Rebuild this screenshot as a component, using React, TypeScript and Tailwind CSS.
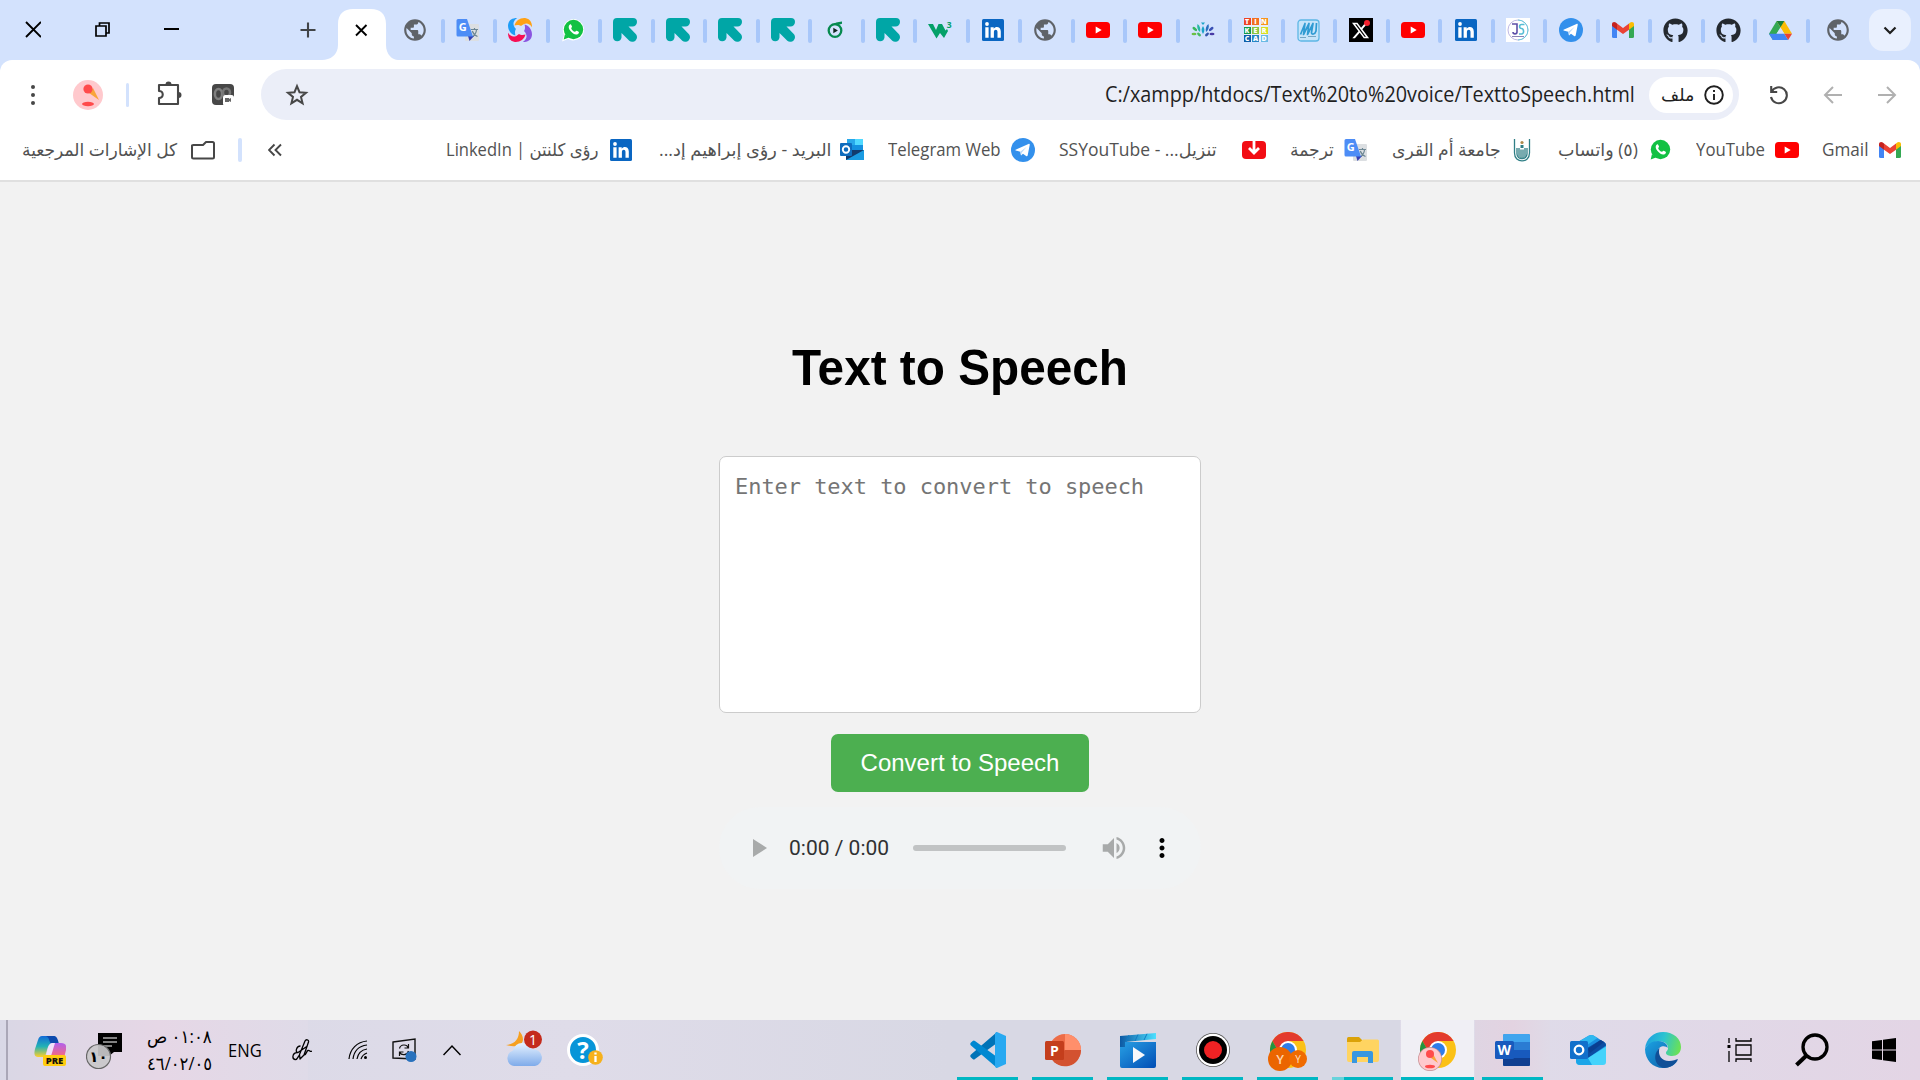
import { useLayoutEffect, useRef, useState, type ReactNode } from "react";
import { FaGithub, FaXTwitter } from "react-icons/fa6";
import { MdPublic, MdVolumeUp, MdMoreVert } from "react-icons/md";

/* A line of text stretched to fill the width of its box. */
function Fit({ className, dir = "rtl", children }: { className: string; dir?: "rtl" | "ltr"; children: ReactNode }) {
  const box = useRef<HTMLDivElement>(null);
  const text = useRef<HTMLSpanElement>(null);
  const [scale, setScale] = useState(1);
  useLayoutEffect(() => {
    const measure = () => {
      if (box.current && text.current) setScale(box.current.offsetWidth / text.current.offsetWidth);
    };
    measure();
    document.fonts.ready.then(measure);
  }, []);
  return (
    <div ref={box} className={"flex shrink-0 justify-start overflow-visible whitespace-nowrap " + className}>
      <span ref={text} dir={dir} className="inline-block shrink-0 origin-left" style={{ transform: `scaleX(${scale})` }}>
        {children}
      </span>
    </div>
  );
}

const Globe = () => <MdPublic className="size-[26px] text-[#5f6368]" />;

const Translate = () => (
  <svg className="size-6" viewBox="0 0 24 24">
    <rect x="9" y="6" width="14" height="17" rx="1.2" fill="#dcdfe2" />
    <path d="M15 11.5h7M18.5 10v1.5M16 19c3-2 4.300-4.500 4.500-7.300M16.300 13c.8 2.700 3 4.500 5.200 5.500" stroke="#6d8794" strokeWidth="1.200" fill="none" />
    <path d="M12 18h6l-4.500 5z" fill="#3540b5" />
    <path d="M2 1h9l6 17.500H2A1.500 1.500 0 0 1 .5 17V2.500A1.500 1.500 0 0 1 2 1z" fill="#4d8df6" />
    <text x="2.800" y="13.200" fontSize="11" fontWeight="700" fill="#fff" className="font-['Open_Sans']">G</text>
  </svg>
);

/* One blade of the pinwheel, turned by quarter steps. */
const blade = "M6.500 7.500C7.500 2.500 13-.8 18 .2c4 .8 6 4 6 9-3-4.500-7-5-11-1.200C11 6.500 8 7 6.500 7.500z";
const Swirl = () => (
  <svg className="size-6" viewBox="0 0 24 24">
    <path d={blade} fill="#ffa114" />
    <path d={blade} fill="#8a55e0" transform="rotate(90 12 12)" />
    <path d={blade} fill="#f70f55" transform="rotate(180 12 12)" />
    <path d={blade} fill="#1e9df7" transform="rotate(270 12 12)" />
  </svg>
);

const Whats = () => (
  <svg className="size-6" viewBox="0 0 24 24">
    <path d="M12.500 1A10.700 10.700 0 1 1 7 21L1 23.500 3 17A11 11 0 0 1 12.500 1z" fill="#fff" />
    <circle cx="12.500" cy="11.500" r="9.700" fill="#12c143" />
    <path d="M4 16l-1.300 5.500 5.300-2z" fill="#12c143" />
    <path d="M9 6.500c-2 1.500-1.500 4 .5 6.500s5 4.500 7.500 3c1.500-1 1-2 .3-2.400l-1.600-.8c-.7-.3-1 .9-1.700 1-1.600-.3-3.400-2-3.800-3.600 0-.5 1-.8.8-1.600l-.7-1.700c-.2-.5-.8-.7-1.300-.4z" fill="#fff" />
  </svg>
);

const ArrowMark = () => (
  <svg className="size-6" viewBox="0 0 24 24" fill="#00a6a6">
    <path d="M0 4a4 4 0 0 1 4-4h16a4 4 0 0 1 4 4c0 2.500-2 4.500-4.500 4.500h-4l7 7.200c2 2 1.900 4.800.3 6.500s-4.700 2.300-6.500.5L8.500 15v4.500A4.300 4.300 0 0 1 0 19.500z" />
  </svg>
);

const PlayRing = () => (
  <svg className="size-6" viewBox="0 0 24 24">
    <circle cx="12" cy="12.500" r="6.300" fill="none" stroke="#068a4f" strokeWidth="2.300" />
    <path d="M9.500 7c2-2.500 5-2.600 9.500-3.400v2.200l-4.500 1.500" fill="#068a4f" />
    <path d="M10.300 9.800l4.600 2.700-4.600 2.700z" fill="#10271e" />
  </svg>
);

const W3 = () => (
  <svg className="size-6" viewBox="0 0 24 24">
    <path d="M0 6h5l3 6 2.500-6H14l3.500 6.500 1.500-1.500 1 2-4 7-4-5-3.500 5.500z" fill="#04a068" />
    <text x="18.800" y="9.500" fontSize="8.500" fontWeight="700" fill="#04a068" className="font-['Open_Sans']">3</text>
  </svg>
);

const LinkedIn = () => (
  <svg className="size-[22px]" viewBox="0 0 22 22">
    <rect width="22" height="22" rx="1.500" fill="#0a66c2" />
    <path d="M3.300 8.300h3.300v10.400H3.300zM8.600 8.300h3.100v1.500c1.900-2.900 7.100-2.200 7.100 2.600v6.300h-3.300v-5.600c0-3.200-3.600-2.900-3.600 0v5.600H8.600z" fill="#fff" />
    <circle cx="5" cy="5" r="1.900" fill="#fff" />
  </svg>
);

const YouTube = () => (
  <svg className="size-6" viewBox="0 0 24 24">
    <rect y="4" width="24" height="16" rx="3.500" fill="#f00" />
    <path d="M9.700 8.600l6 3.400-6 3.400z" fill="#fff" />
  </svg>
);

const Lotus = () => (
  <svg className="size-6" viewBox="0 0 24 24">
    <path d="M12 16c-2-3-1.800-5.500 0-8 1.800 2.500 2 5 0 8z" fill="#1aa3c8" />
    <path d="M9 14c-2.500-2-3.300-4.500-2.500-8 2.500 2 3.300 4.500 2.500 8z" fill="#25b7a5" />
    <path d="M15 14c2.500-2 3.300-4.500 2.500-8-2.500 2-3.300 4.500-2.500 8z" fill="#2a6fc0" />
    <path d="M10 4.500h4L12 7z" fill="#1aa3c8" />
    <ellipse cx="3.800" cy="11" rx="2.800" ry="1.400" transform="rotate(40 3.800 11)" fill="#38b65c" />
    <ellipse cx="20.200" cy="11" rx="2.800" ry="1.400" transform="rotate(-40 20.200 11)" fill="#3950b5" />
    <ellipse cx="3" cy="16" rx="2.500" ry="1.300" fill="#6ac043" />
    <ellipse cx="21" cy="16" rx="2.500" ry="1.300" fill="#493aa6" />
    <ellipse cx="8" cy="16.500" rx="2.300" ry="1.300" transform="rotate(40 8 16.500)" fill="#46bb61" />
    <ellipse cx="16" cy="16.500" rx="2.300" ry="1.300" transform="rotate(-40 16 16.500)" fill="#3557ad" />
  </svg>
);

const tinker = [
  ["T", "bg-[#ee4323]"], ["I", "bg-[#f36f21]"], ["N", "bg-[#f7941d]"],
  ["K", "bg-[#149a48]"], ["E", "bg-[#8bc53f]"], ["R", "bg-[#d7df23]"],
  ["C", "bg-[#0d5ea8]"], ["A", "bg-[#2786c5]"], ["D", "bg-[#6bbbe4]"],
];
const Tinker = () => (
  <span className="grid size-6 grid-cols-[7px_7px_7px] grid-rows-[7px_7px_7px] gap-[1.5px] bg-[#e8eefc]">
    {tinker.map(([l, c]) => (
      <span key={l} className={"flex items-center justify-center text-[7px] leading-none font-extrabold text-white " + c}>{l}</span>
    ))}
  </span>
);

const Sketch = () => (
  <svg className="size-[23px]" viewBox="0 0 23 23" fill="none">
    <rect x="1" y="1" width="21" height="21" rx="3" stroke="#5eb7e5" strokeWidth="1.300" fill="#c6e4fa" />
    <path d="M3.500 15.500L8 4.500l-1.500 11L12 4.500l-1.500 11L16 4.500l-1.500 9c0 2.500 3.500 2 4.500-1.500l.5-8" stroke="#2f9bd3" strokeWidth="1.700" strokeLinejoin="round" />
    <path d="M3 18.500h6M11 17.500h8" stroke="#75a7c4" />
  </svg>
);

const XMark = () => (
  <span className="relative flex size-6 items-center justify-center bg-black">
    <FaXTwitter className="size-[19px] text-white" />
    <span className="absolute top-0.5 right-[3px] size-1.5 rounded-full bg-[#f4212e]" />
  </span>
);

const JS = () => (
  <svg className="size-6 bg-white" viewBox="0 0 24 24" fill="none">
    <circle cx="12" cy="12" r="10" stroke="#b8b0e0" strokeWidth=".9" />
    <path d="M12 2a10 10 0 0 1 0 20" stroke="#69cbdc" />
    <path d="M6 6h5v8c0 2.500-4 2.500-4 0" stroke="#5d4fa8" strokeWidth="1.600" />
    <path d="M18.500 6.500h-3c-2.500 0-2.500 4 0 4s3 5.500 0 5.500h-2.500" stroke="#55bdd4" strokeWidth="1.600" />
    <path d="M6 18.500h12" stroke="#8a83b7" strokeWidth="1" />
  </svg>
);

const Telegram = () => (
  <svg className="size-6" viewBox="0 0 24 24">
    <circle cx="12" cy="12" r="12" fill="#3390ec" />
    <path d="M4.500 11.800L17.500 6c1-.4 1.400.2 1.200 1.100l-2 10.200c-.2 1-.8 1.200-1.600.7L12 15.700l-2 1.700-.7-3.700-4.800-1.300z" fill="#fff" />
    <path d="M9.300 13.700l6.500-5-5 5.800-.8 2.900z" fill="#b9d9f8" />
  </svg>
);

const Gmail = () => (
  <svg className="size-[22px]" viewBox="0 0 22 22">
    <path d="M0 6l5 3v10H1.500A1.500 1.500 0 0 1 0 17.500z" fill="#4285f4" />
    <path d="M22 6l-5 3v10h3.500a1.500 1.500 0 0 0 1.500-1.500z" fill="#34a853" />
    <path d="M17 4.500l1.200-.9C20 2.300 22 3.500 22 5v2l-5 3.700z" fill="#fbbc04" />
    <path d="M0 5c0-1.500 2-2.700 3.800-1.400L5 4.500v6.200L0 7z" fill="#c5221f" />
    <path d="M5 4.500L11 9l6-4.500v6.200L11 15l-6-4.300z" fill="#ea4335" />
  </svg>
);

const Github = () => <FaGithub className="size-[25px] text-[#24292f]" />;

const Drive = () => (
  <svg className="size-[23px]" viewBox="0 0 24 24">
    <path d="M8 2L0 15.500 4 22l8-13.500z" fill="#34a853" />
    <path d="M8 2h8l8 13.500h-8z" fill="#fbbc04" />
    <path d="M8 2h8l-4 6.700z" fill="#188038" />
    <path d="M12 9l4 6.500H8z" fill="#d3e2fd" />
    <path d="M7.700 15.500H16L20 22H4L0 15.500z" fill="#4285f4" />
    <path d="M16 15.500h8L20 22z" fill="#ea4335" />
  </svg>
);

const tabs = [
  Globe, Translate, Swirl, Whats, ArrowMark, ArrowMark, ArrowMark, ArrowMark, PlayRing, ArrowMark,
  W3, LinkedIn, Globe, YouTube, YouTube, Lotus, Tinker, Sketch, XMark, YouTube, LinkedIn, JS,
  Telegram, Gmail, Github, Github, Drive,
];

function TabStrip() {
  return (
    <div className="flex h-[60px] bg-[#d3e2fd]">
      <svg className="ml-[25px] h-[60px] w-4" viewBox="0 0 16 60" stroke="#000" strokeWidth="1.900">
        <path d="M1 22l15 15M16 22L1 37" />
      </svg>
      <svg className="ml-[54px] h-[60px] w-4" viewBox="0 0 16 60" stroke="#000" strokeWidth="1.700" fill="none">
        <path d="M1 26h10v10H1zM4.500 26v-3H14v10h-3" />
      </svg>
      <svg className="ml-[53px] h-[60px] w-4" viewBox="0 0 16 60" stroke="#000" strokeWidth="2">
        <path d="M0 29h15" />
      </svg>
      <svg className="ml-[120px] h-[60px] w-4" viewBox="0 0 16 60" stroke="#414447" strokeWidth="2.100">
        <path d="M.5 30h15M8 22.500v15" />
      </svg>
      <svg className="ml-1.5 h-[60px] w-[76px] shrink-0" viewBox="0 0 76 60">
        <path d="M0 60c8 0 16-5 16-15V24C16 14 22 9 31 9h18c9 0 15 5 15 15v21c0 10 7 15 12 15z" fill="#fff" />
        <path d="M34 25l10.500 10.500M44.500 25L34 35.500" stroke="#000" strokeWidth="1.900" />
      </svg>
      <div className="-ml-[6px] flex h-[60px] shrink-0 items-center">
        {tabs.map((Icon, i) => (
          <div key={i} className="flex h-6 w-[52.530px] shrink-0 items-center">
            <div className="flex flex-1 justify-center pr-[2px]">
              <Icon />
            </div>
            <div className="mt-0.5 h-6 w-1 rounded-full bg-[#a8c7fa]" />
          </div>
        ))}
      </div>
      <div className="ml-[15px] flex items-center"><Globe /></div>
      <div className="mt-[9px] ml-[18px] flex size-[42px] items-center justify-center rounded-[14px] bg-[#e9f0fe]">
        <svg className="size-4" viewBox="0 0 16 16" fill="none" stroke="#1f1f1f" strokeWidth="2.200">
          <path d="M2.500 5.500L8 11l5.500-5.500" />
        </svg>
      </div>
    </div>
  );
}

function Toolbar() {
  return (
    <div className="bg-[#d3e2fd]">
      <div className="flex h-[60px] items-center rounded-t-[12px] bg-white pt-[9px]">
        <div className="ml-[31px] flex w-1 flex-col gap-[4px]">
          <i className="size-1 rounded-full bg-[#474747]" />
          <i className="size-1 rounded-full bg-[#474747]" />
          <i className="size-1 rounded-full bg-[#474747]" />
        </div>
        <svg className="ml-[38px] size-[30px]" viewBox="0 0 30 30">
          <circle cx="15" cy="15" r="15" fill="#ffc9cd" />
          <path d="M20 8l6 12-10-7z" fill="#f9a43a" />
          <circle cx="15" cy="9" r="4.600" fill="#ff4b4b" />
          <ellipse cx="15" cy="24" rx="6" ry="2.200" fill="#ff4b4b" />
        </svg>
        <i className="ml-[23px] h-6 w-[3px] rounded-full bg-[#d3e2fd]" />
        <svg className="ml-[27px] size-7" viewBox="0 0 28 28" fill="none" stroke="#474747" strokeWidth="2.100" strokeLinejoin="round">
          <path d="M3 4h19v19H3v-6c5 0 5-7 0-7z" />
          <path d="M9.500 3.500a3 3 0 0 1 6 0zM22.500 11a3 3 0 0 1 0 6z" fill="#474747" stroke="none" />
        </svg>
        <svg className="ml-[28px] size-[22px]" viewBox="0 0 22 22">
          <rect width="22" height="21" rx="4" fill="#474747" />
          <ellipse cx="6.500" cy="10" rx="3.600" ry="5" fill="none" stroke="#808080" strokeWidth="2.500" />
          <ellipse cx="14.500" cy="8.500" rx="3.500" ry="4" fill="none" stroke="#777" strokeWidth="2.500" />
          <rect x="11" y="11" width="11" height="11" rx="2.500" fill="#fff" />
          <path d="M13 14h4v1l2-1v4l-2-1v1h-4z" fill="#666" />
        </svg>
        <div className="ml-[27px] flex h-[51px] w-[1478px] shrink-0 items-center rounded-full bg-[#ebeef8]">
          <svg className="ml-[24px] size-6 shrink-0" viewBox="0 0 24 24" fill="none" stroke="#474747" strokeWidth="2">
            <path d="M12 3.200l2.500 6 6.500.5-5 4.200 1.600 6.400L12 16.800l-5.600 3.500L8 13.900 3 9.700l6.500-.5z" />
          </svg>
          <Fit dir="ltr" className="mb-0.5 ml-[796px] w-[530px] text-[21px] leading-[28px] text-[#1f1f1f]">
            C:/xampp/htdocs/Text%20to%20voice/TexttoSpeech.html
          </Fit>
          <div className="ml-[14px] flex h-9 w-[84px] shrink-0 items-center rounded-full bg-white">
            <Fit className="ml-3 w-[33px] text-[17px] leading-6 text-[#1f1f1f]">ملف</Fit>
            <svg className="ml-2.5 size-5" viewBox="0 0 20 20" fill="none" stroke="#1f1f1f" strokeWidth="1.900">
              <circle cx="10" cy="10" r="8.800" />
              <path d="M10 9v6M10 5v2" />
            </svg>
          </div>
        </div>
        <svg className="ml-[30px] size-5" viewBox="0 0 20 20" fill="none" stroke="#474747" strokeWidth="2.100">
          <path d="M2.200 1v6h6M2.500 7a8 8 0 1 1-.5 5" />
        </svg>
        <svg className="ml-[34px] size-5" viewBox="0 0 20 20" fill="none" stroke="#b0b0b0" strokeWidth="2">
          <path d="M19 10H2M10 2L2 10l8 8" />
        </svg>
        <svg className="ml-[34px] size-5" viewBox="0 0 20 20" fill="none" stroke="#b0b0b0" strokeWidth="2">
          <path d="M1 10h17M10 2l8 8-8 8" />
        </svg>
      </div>
    </div>
  );
}

const Outlook = () => (
  <svg className="size-6" viewBox="0 0 24 24">
    <rect x="7" y="1" width="16" height="14" fill="#1490df" />
    <rect x="15" y="1" width="8" height="6" fill="#50d9ff" />
    <rect x="7" y="1" width="8" height="6" fill="#28a8ea" />
    <path d="M6 12l18 0v10H6z" fill="#123b6d" />
    <path d="M24 12v10H6z" fill="#1a9be2" />
    <rect y="5" width="12" height="13" rx="1" fill="#0f6cbd" />
    <circle cx="6" cy="11.500" r="3.200" fill="none" stroke="#fff" strokeWidth="1.900" />
  </svg>
);

const Download = () => (
  <svg className="size-6" viewBox="0 0 24 24">
    <rect y="3" width="24" height="18" rx="4" fill="#f20d14" />
    <path d="M12 3v11M7 10l5 5 5-5" stroke="#fff" strokeWidth="2.800" fill="none" />
  </svg>
);

const Hands = () => (
  <svg className="size-6" viewBox="0 0 24 24" fill="none" stroke="#2f7f86" strokeWidth="1.300">
    <path d="M4.500 1v14c0 10.500 15 10.500 15 0V1M7 10v6c0 6 10 6 10 0v-6" />
    <path d="M9 10v9M11 11.500v9M13 11.500v9M15 10v9" strokeWidth="1.500" stroke="#4b8f95" />
    <circle cx="12" cy="4.500" r="1.600" fill="#b08a4c" stroke="none" />
    <path d="M10.500 7h3v3h-3z" fill="#2f7f86" stroke="none" />
  </svg>
);

const bm = "mb-[2px] text-[17.500px] leading-6 text-[#525252]";

function Bookmarks() {
  return (
    <div className="flex h-[62px] items-center border-b-2 border-[#e0e0e0] bg-white">
      <Fit className={"ml-[22px] w-[155px] " + bm}>كل الإشارات المرجعية</Fit>
      <svg className="ml-3.5 h-5 w-6" viewBox="0 0 24 20" fill="none" stroke="#474747" strokeWidth="2" strokeLinejoin="round">
        <path d="M1 5.500V17a1.500 1.500 0 0 0 1.500 1.500h19A1.500 1.500 0 0 0 23 17V3.500A1.500 1.500 0 0 0 21.500 2H15l-3 3H2.500z" />
      </svg>
      <i className="ml-[23px] h-6 w-[4px] rounded-full bg-[#d3e2fd]" />
      <svg className="ml-[26px] size-3.5" viewBox="0 0 14 14" fill="none" stroke="#474747" strokeWidth="1.900">
        <path d="M6.500 1.500L1 7l5.500 5.500M13 1.500L7.500 7l5.500 5.500" />
      </svg>
      <Fit className={"ml-[164px] w-[153px] " + bm}>رؤى كلنتن | LinkedIn</Fit>
      <div className="ml-[11px]"><LinkedIn /></div>
      <Fit className={"ml-[27px] w-[172px] " + bm}>البريد - رؤى إبراهيم إد...</Fit>
      <div className="ml-[9px]"><Outlook /></div>
      <Fit dir="ltr" className={"ml-6 w-[113px] " + bm}>Telegram Web</Fit>
      <div className="ml-2.5"><Telegram /></div>
      <Fit className={"ml-6 w-[158px] " + bm}>تنزيل... - SSYouTube</Fit>
      <div className="ml-[25px]"><Download /></div>
      <Fit className={"ml-6 w-11 " + bm}>ترجمة</Fit>
      <div className="ml-2.5"><Translate /></div>
      <Fit className={"ml-6 w-[109px] " + bm}>جامعة أم القرى</Fit>
      <div className="ml-[9px]"><Hands /></div>
      <Fit className={"ml-6 w-[80px] " + bm}>(٥) واتساب</Fit>
      <div className="ml-[10px]"><Whats /></div>
      <Fit dir="ltr" className={"ml-[24px] w-[69px] " + bm}>YouTube</Fit>
      <div className="ml-[10px]"><YouTube /></div>
      <Fit dir="ltr" className={"ml-[23px] w-[46px] " + bm}>Gmail</Fit>
      <div className="ml-[11px]"><Gmail /></div>
    </div>
  );
}

function Page() {
  return (
    <main className="flex h-[838px] flex-col items-center bg-[#f2f2f2] font-['Liberation_Sans',sans-serif]">
      <h1 className="mt-[158px] text-[50px] leading-[56px] font-bold text-black">
        <Fit dir="ltr" className="w-[336px]">Text to Speech</Fit>
      </h1>
      <textarea
        className="mt-[60px] block h-[257px] w-[482px] resize-none rounded-[7px] border border-[#ccc] bg-white px-[15px] py-[15px] font-['DejaVu_Sans_Mono',monospace] text-[22px] leading-[30px] tracking-[-0.050px] outline-none placeholder:text-[#757575]"
        placeholder="Enter text to convert to speech"
      />
      <button className="mt-[21px] h-[58px] w-[258px] shrink-0 rounded-[7px] bg-[#4caf50] text-[24px] text-white">Convert to Speech</button>
      <div className="mt-[15px] flex h-[82px] w-[482px] shrink-0 items-center rounded-full bg-[#f1f3f4]">
        <svg className="ml-[34px] h-[18px] w-3.5" viewBox="0 0 14 18"><path d="M0 0l14 9-14 9z" fill="#a8aaaa" /></svg>
        <Fit dir="ltr" className="ml-[22px] w-[100px] font-[Roboto,sans-serif] text-[21px] leading-6 text-[#303132]">0:00 / 0:00</Fit>
        <div className="ml-[24px] h-1.5 w-[153px] rounded-full bg-[#c1c3c4]" />
        <MdVolumeUp className="ml-[33px] size-[30px] text-[#a8aaaa]" />
        <MdMoreVert className="ml-[18px] size-[30px] text-black" />
      </div>
    </main>
  );
}

/* Taskbar artwork */
const VsCode = () => (
  <svg className="size-9" viewBox="0 0 36 36">
    <path d="M27 0L1 22.500c-1 1-1 2 0 3l1.700 1.500c.8.700 1.500.7 2.300 0L27 11z" fill="#0073b7" />
    <path d="M27 36L1 13.500c-1-1-1-2 0-3L2.700 9c.8-.7 1.500-.7 2.300 0L27 25z" fill="#0088d1" />
    <path d="M27 0l9 4v28l-9 4c-1 0-2-.8-2-2V2c0-1.200 1-2 2-2z" fill="#28a9f1" />
  </svg>
);
const PowerPoint = () => (
  <svg className="size-9" viewBox="0 0 36 36">
    <circle cx="20" cy="18" r="16" fill="#ed6c47" />
    <path d="M20 2a16 16 0 0 1 16 16H20z" fill="#ff8f6b" />
    <path d="M36 18a16 16 0 0 1-30 8l14-8z" fill="#d35230" />
    <rect y="9" width="19" height="19" rx="1.500" fill="#c43e1c" />
    <text x="5" y="23.500" fontSize="14" fontWeight="700" fill="#fff">P</text>
  </svg>
);
const Movies = () => (
  <svg className="size-9" viewBox="0 0 36 36">
    <defs>
      <linearGradient id="mv" x2="1" y2="1"><stop stopColor="#28a0e4" /><stop offset="1" stopColor="#004db5" /></linearGradient>
      <linearGradient id="mt"><stop stopColor="#0c59a4" /><stop offset="1" stopColor="#4ce0ff" /></linearGradient>
    </defs>
    <path d="M0 4l36-3v6L5 10v5H0z" fill="url(#mt)" />
    <path d="M9 3l-3 7M18 2.500L15 9M27 1.800L24 8" stroke="#127bc3" />
    <path d="M5 10h31v24a2 2 0 0 1-2 2H2a2 2 0 0 1-2-2V15h5z" fill="url(#mv)" />
    <path d="M13 15v16l12-8z" fill="#f7f8fb" />
  </svg>
);
const Recorder = () => (
  <svg className="size-9" viewBox="0 0 36 36">
    <circle cx="18" cy="18" r="17" fill="#555" /><circle cx="18" cy="18" r="16.200" fill="#fff" />
    <circle cx="18" cy="18" r="14" fill="#000" /><circle cx="18" cy="18" r="9" fill="#ef2224" />
  </svg>
);
const ChromeBase = () => (
  <>
    <circle cx="20" cy="18" r="18" fill="#fbc116" />
    <path d="M4.400 9A18 18 0 0 1 35.600 9H20l-7.800 13.500z" fill="#e33b2e" />
    <path d="M4.400 9l7.800 13.500L20 27l-6 8A18 18 0 0 1 4.400 9z" fill="#229342" />
    <circle cx="20" cy="18" r="9" fill="#fff" /><circle cx="20" cy="18" r="7" fill="#2f7de9" />
  </>
);
const ChromeY = () => (
  <svg className="h-[39px] w-[39px]" viewBox="0 0 39 39">
    <ChromeBase />
    <circle cx="12" cy="27" r="12" fill="#eb6500" /><circle cx="30" cy="27" r="9" fill="#f06b00" />
    <text x="12" y="32" fontSize="13" fontWeight="600" textAnchor="middle" fill="#ffd5ae">Y</text>
    <text x="30" y="30.500" fontSize="10" textAnchor="middle" fill="#ffe0c4">Y</text>
  </svg>
);
const ChromeUser = () => (
  <svg className="h-[39px] w-[39px]" viewBox="0 0 39 39">
    <ChromeBase />
    <circle cx="12" cy="27" r="12" fill="#c58f93" /><circle cx="12" cy="27" r="11.300" fill="#ffc9cd" />
    <path d="M15 22l5 9-7-5z" fill="#f9a43a" /><circle cx="12" cy="22" r="4" fill="#ff4b4b" />
    <ellipse cx="12" cy="34.500" rx="5" ry="1.800" fill="#ff4b4b" />
  </svg>
);
const Files = () => (
  <svg className="size-9" viewBox="0 0 36 36">
    <path d="M2 6.500A1.500 1.500 0 0 1 3.500 5H14l3 3v6H2z" fill="#dba208" />
    <path d="M2 10h13l3-2.500h14.500A1.500 1.500 0 0 1 34 9v19a2 2 0 0 1-2 2H4a2 2 0 0 1-2-2z" fill="#ffd461" />
    <path d="M7 31V21a2 2 0 0 1 2-2h17a2 2 0 0 1 2 2v10h-5v-6H12v6z" fill="#3797e0" />
  </svg>
);
const Word = () => (
  <svg className="size-9" viewBox="0 0 36 36">
    <rect x="8" y="2" width="27" height="32" rx="1.500" fill="#2b7cd3" />
    <path d="M8 10V3.500A1.500 1.500 0 0 1 9.500 2h24A1.500 1.500 0 0 1 35 3.500V10z" fill="#41a5ee" />
    <path d="M8 18h27v8H8z" fill="#185abd" />
    <path d="M8 26h27v6.500a1.500 1.500 0 0 1-1.500 1.500h-24A1.500 1.500 0 0 1 8 32.500z" fill="#103f91" />
    <rect y="9" width="19" height="18" rx="1.500" fill="#185abd" />
    <text x="2.500" y="23" fontSize="14" fontWeight="700" fill="#fff">W</text>
  </svg>
);
const OutlookNew = () => (
  <svg className="size-9" viewBox="0 0 36 36">
    <path d="M6 11L19 3.500c1.500-.8 3-.8 4.500 0L34 10c1.500 1 2 2 2 3.500V20L18 28 6 22z" fill="#1a8fe0" />
    <path d="M14 18L30.500 8l3.500 2c1.500 1 2 2 2 3.500L18 26z" fill="#0c4da2" />
    <path d="M18 17l12.500-9 3.500 2-14 11z" fill="#0a3f91" />
    <path d="M9 9.500l10-6c1.500-.8 3-.8 4.500 0l4 2.500-12 8z" fill="#2fb8f0" />
    <path d="M36 14.500V30a3 3 0 0 1-3 3H10a4 4 0 0 1-4-4l12-3z" fill="#45d3fb" />
    <path d="M6 26l12 0 4 7H10a4 4 0 0 1-4-4z" fill="#1ba5e8" />
    <rect y="9" width="18" height="18" rx="1.500" fill="#1270cb" />
    <circle cx="9" cy="18" r="4.300" fill="none" stroke="#fff" strokeWidth="2.300" />
  </svg>
);
const Edge = () => (
  <svg className="size-9" viewBox="0 0 36 36">
    <defs>
      <linearGradient id="eg" x1="0" y1=".3" x2="1" y2=".5"><stop stopColor="#1d9fe0" /><stop offset=".5" stopColor="#2cc4d0" /><stop offset="1" stopColor="#6be155" /></linearGradient>
      <linearGradient id="eb" x2="1" y2="1"><stop stopColor="#1ba2e2" /><stop offset="1" stopColor="#0c59a4" /></linearGradient>
    </defs>
    <path d="M0 17C1 6 9 0 18 0c11 0 18 7 18 15 0 6-4 9-9 9-3 0-6-1-6-3s2-2 2-5c0-4-3-6.500-8-6.500C8 9.500 2 12 0 17z" fill="url(#eg)" />
    <path d="M0 17c2-5 7-8 13-8 7 0 10 4 9.500 7C21 13 13 13 12 21c-1 7 5 11 11 11 5 0 8-2 10-4-3 5-8 8-15 8C8 36 0 28 0 17z" fill="url(#eb)" />
    <path d="M14.500 16c-2 7 2 13 9.500 13 4 0 7-1.500 9-2-2.500 5.500-8 9-14 9-9-2-12-13-4.500-20z" fill="#104f97" />
  </svg>
);

const apps: { icon: () => ReactNode; state?: "open" | "stack" | "active" }[] = [
  { icon: VsCode, state: "open" }, { icon: PowerPoint, state: "open" }, { icon: Movies, state: "open" },
  { icon: Recorder, state: "open" }, { icon: ChromeY, state: "open" }, { icon: Files, state: "stack" },
  { icon: ChromeUser, state: "active" }, { icon: Word, state: "open" }, { icon: OutlookNew }, { icon: Edge },
];

function Taskbar() {
  return (
    <footer className="flex h-[60px] bg-linear-to-r from-[#d9d8e6] from-0% via-[#dfdbe9] via-80% to-[#e3d5e5]">
      <div className="flex w-[950px] items-center bg-linear-to-r from-[#d9d8e6] via-[#dfdce9] via-60% to-[#d8d8e4]">
        <i className="ml-1.5 h-full w-0.5 bg-[#aaa7b7]" />
        <div className="flex h-full w-[300px] items-center bg-linear-to-r from-[#dad7e5] via-[#e6d7e6] to-[#dfdbe8]">
          <svg className="ml-[26px] h-8 w-8" viewBox="0 0 32 32">
            <defs>
              <linearGradient id="ca" x2="0" y2="1"><stop stopColor="#126ad8" /><stop offset=".5" stopColor="#22b2b5" /><stop offset="1" stopColor="#ffd02b" /></linearGradient>
              <linearGradient id="cb" x2="0" y2="1"><stop stopColor="#b160ed" /><stop offset="1" stopColor="#ff6c71" /></linearGradient>
            </defs>
            <path d="M8 2h11c4 0 4 4 5 8h-7c-2 0-3 2-4 6l-2 7H4c-4 0-4-4-3-8L4 6c1-3 2-4 4-4z" fill="url(#ca)" />
            <path d="M12 2h8c3 0 4 4 5 8h-7c-3 0-2-7-6-8z" fill="#0c49ad" />
            <path d="M19 9h8c5 0 6 3 5 7l-2 8H14z" fill="url(#cb)" />
            <path d="M18 9h3l-4 13h-5l2-8c1-3 2-5 4-5z" fill="#f0dffa" />
            <rect x="9" y="21" width="23" height="11" rx="2" fill="#ffcd0f" />
            <text x="20.500" y="30" textAnchor="middle" fontSize="9.500" fontWeight="800" fill="#17130a">PRE</text>
          </svg>
          <svg className="ml-5 h-10 w-9" viewBox="0 0 36 40">
            <path d="M12 3h24v19h-8l-5 4H12z" fill="#000" />
            <path d="M17 8h14M17 12h14M17 16h9" stroke="#fff" strokeWidth="1.200" />
            <circle cx="12.500" cy="26.500" r="12" fill="#c9c8ca" fillOpacity=".92" stroke="#666" strokeWidth="1.200" />
            <text x="12.500" y="32" textAnchor="middle" fontSize="15" fontWeight="600" fill="#000">١٠</text>
          </svg>
          <div className="ml-[25px] flex w-[65px] flex-col text-[18px] leading-[27px] text-black">
            <Fit className="w-[65px]">٠١:٠٨ ص</Fit>
            <Fit className="w-[65px]">٤٦/٠٢/٠٥</Fit>
          </div>
          <Fit dir="ltr" className="ml-4 w-[34px] text-[18px] leading-6 text-black">ENG</Fit>
        </div>
        <svg className="-ml-4 h-6 w-5" viewBox="0 0 20 24" fill="none" stroke="#000" strokeWidth="1.300" strokeLinejoin="round">
          <path d="M13 3c1-2 4-1.500 3.500 1L12 17l-4 4-.5-4.500zM8.500 8C4 8 3 15 6 14.500L15.500 8M5 14.500C0 15 0 21 3 21.500s3-4 5-5M12 17c3 0 2-4 4-4.500s2 2 4 .5" />
        </svg>
        <svg className="ml-[36px] size-5" viewBox="0 0 20 20" fill="none" stroke="#000" strokeWidth="1.200">
          <path d="M1 19C2 9 9 2 19 1M5 19c1-8 6-13 14-14M9 19c1-6 4-9 10-10M13 19c1-3 3-5 6-6" />
          <circle cx="17.500" cy="17.500" r="1.500" fill="#000" stroke="none" />
        </svg>
        <svg className="ml-6 h-6 w-[25px]" viewBox="0 0 25 24" fill="none" stroke="#111" strokeWidth="1.400">
          <path d="M1 4l22-3v20L1 20z" />
          <path d="M7.500 10.500c1-4.500 7.500-4.500 8.500-1M16.500 6v4h-4M16.500 13c-1 4.500-7.500 4.500-8.500 1.500M7.500 18v-4h4" strokeWidth="1.200" />
          <circle cx="19" cy="18.500" r="5.500" fill="#2972bd" stroke="none" />
        </svg>
        <svg className="ml-[26px] h-3 w-[18px]" viewBox="0 0 18 12" fill="none" stroke="#000" strokeWidth="1.500"><path d="M.5 11L9 2l8.500 9" /></svg>
        <svg className="ml-[44px] h-[44px] w-[38px]" viewBox="0 0 38 44">
          <defs><linearGradient id="cl" x2="0" y2="1"><stop stopColor="#e6f2ff" /><stop offset="1" stopColor="#7fabea" /></linearGradient></defs>
          <path d="M14 3c8 8 4 19-13 14 9-1 13-6 13-14z" fill="#f6a021" />
          <path d="M9 38a8 8 0 0 1-1-15.500 10 10 0 0 1 19-1A8 8 0 0 1 30 38z" fill="url(#cl)" />
          <circle cx="28" cy="11.500" r="9" fill="#c42b1c" />
          <text x="28" y="16.500" textAnchor="middle" fontSize="14" fill="#fff">1</text>
        </svg>
        <div className="relative ml-[24px] flex h-8 w-9 items-center">
          <span className="flex size-8 items-center justify-center rounded-full border-3 border-white bg-[#0795d8] text-[24px] leading-[26px] font-bold text-white">?</span>
          <svg className="absolute top-4 right-0 size-[15px]" viewBox="0 0 15 15">
            <circle cx="7.500" cy="7.500" r="7.300" fill="#f6b11c" />
            <path d="M7.500 6v6M7.500 2.500v2" stroke="#fff" strokeWidth="2.300" />
          </svg>
        </div>
      </div>
      {apps.map(({ icon: Icon, state }, i) => (
        <div
          key={i}
          className={
            "relative flex w-[75px] shrink-0 items-center justify-center " +
            (state === "active" ? "border-x border-transparent bg-[#f0eff5] bg-clip-padding" : i < 6 ? "bg-[#d8d8e4]" : i === 7 ? "bg-linear-to-r from-[#dfd5e3] via-[#e3d3e1] to-[#dfdae7]" : "")
          }
        >
          <div className={i === 6 || i === 4 ? "pt-[3px]" : ""}><Icon /></div>
          {state && (
            <span className={"absolute bottom-0 h-[3px] bg-[#00b7c3] " + (state === "active" ? "inset-x-0" : "left-[7px] w-[61px]")}>
              {state === "stack" && <i className="block h-full w-3 bg-[#68d3db]" />}
            </span>
          )}
        </div>
      ))}
      <svg className="mt-[18px] ml-[27px] h-6 w-[25px] shrink-0" viewBox="0 0 25 24" fill="none" stroke="#000" strokeWidth="1.300">
        <path d="M2 0v5M2 13v11M9 0v3h15V0M9 24v-3h15v3M9 7h15v10H9z" />
        <path d="M.5 7h3v3h-3z" fill="#000" stroke="none" />
      </svg>
      <svg className="mt-[13px] ml-[43px] size-[34px] shrink-0" viewBox="0 0 34 34" fill="none" stroke="#000">
        <circle cx="20" cy="14" r="12" strokeWidth="3.300" /><path d="M11.500 22.500L1.500 32" strokeWidth="4" />
      </svg>
      <svg className="mt-[18px] ml-[43px] size-6 shrink-0" viewBox="0 0 24 24" fill="#000">
        <path d="M0 3.300L10 2v9.500H0zM11 1.800L24 0v11.500H11zM0 12.500h10V22L0 20.700zM11 12.500h13V24l-13-1.800z" />
      </svg>
    </footer>
  );
}

export default function App() {
  return (
    <div className="h-[1080px] w-[1920px] overflow-hidden font-['Open_Sans','DejaVu_Sans',sans-serif]">
      <TabStrip />
      <Toolbar />
      <Bookmarks />
      <Page />
      <Taskbar />
    </div>
  );
}
